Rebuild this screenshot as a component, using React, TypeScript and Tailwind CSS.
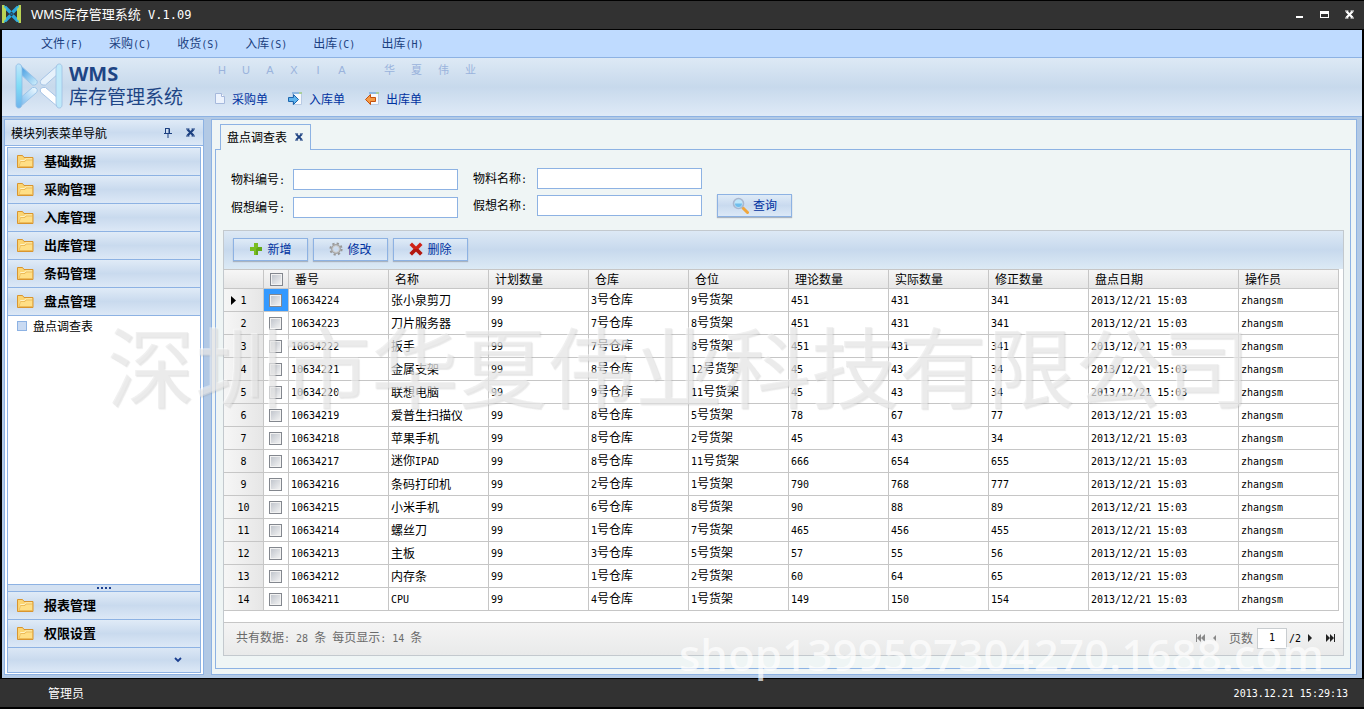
import type { ReactNode } from 'react';

const menus = ['文件(F)', '采购(C)', '收货(S)', '入库(S)', '出库(C)', '出库(H)'];

const groups = ['基础数据', '采购管理', '入库管理', '出库管理', '条码管理', '盘点管理'];

const bottomGroups = ['报表管理', '权限设置'];

const columns = ['番号', '名称', '计划数量', '仓库', '仓位', '理论数量', '实际数量', '修正数量', '盘点日期', '操作员'];

const rows = [
  ['10634224', '张小泉剪刀', '3号仓库', '9号货架', '451', '431', '341'],
  ['10634223', '刀片服务器', '7号仓库', '8号货架', '451', '431', '341'],
  ['10634222', '扳手', '7号仓库', '8号货架', '451', '431', '341'],
  ['10634221', '金属支架', '8号仓库', '12号货架', '45', '43', '34'],
  ['10634220', '联想电脑', '9号仓库', '11号货架', '45', '43', '34'],
  ['10634219', '爱普生扫描仪', '8号仓库', '5号货架', '78', '67', '77'],
  ['10634218', '苹果手机', '8号仓库', '2号货架', '45', '43', '34'],
  ['10634217', '迷你IPAD', '8号仓库', '11号货架', '666', '654', '655'],
  ['10634216', '条码打印机', '2号仓库', '1号货架', '790', '768', '777'],
  ['10634215', '小米手机', '6号仓库', '8号货架', '90', '88', '89'],
  ['10634214', '螺丝刀', '1号仓库', '7号货架', '465', '456', '455'],
  ['10634213', '主板', '3号仓库', '5号货架', '57', '55', '56'],
  ['10634212', '内存条', '1号仓库', '2号货架', '60', '64', '65'],
  ['10634211', 'CPU', '4号仓库', '1号货架', '149', '150', '154'],
];

// Latin runs are set in a half-width mono face, Chinese runs keep the page font
function T({ children }: { children: string }) {
  return (
    <>
      {children.split(/([ -~]+)/).map((part, i) =>
        i % 2 ? (
          <span key={i} className="font-['DejaVu_Sans_Mono',monospace] text-[10px] whitespace-pre">{part}</span>
        ) : (
          part
        ),
      )}
    </>
  );
}

function FolderIcon() {
  return (
    <svg width="17" height="14" viewBox="0 0 17 14" className="shrink-0">
      <path d="M.5 13.5V1.5h5l1.5 2h9v10z" fill="#fbd573" stroke="#d9952f" />
      <path d="M2.5 12.5l1-6h4l1-1.5h6.5" fill="none" stroke="#fff3c4" />
      <path d="M2 12.5l1.5-5h4.5l1-1.5h6.5v6.5z" fill="#ffdf86" stroke="#e3a741" strokeWidth=".6" />
    </svg>
  );
}

function BrandMark() {
  return (
    <svg width="20" height="20" viewBox="0 0 20 20">
      <path d="M3 3l5.500 5.500M3 17l5.500-5.500M16 3l-5.500 5.500M16 17l-5.500-5.500" stroke="#2ba6dc" strokeWidth="3.200" />
      <path d="M0 1h2l2 2v14l-2 2H0z" fill="#b9d455" />
      <path d="M19 1h-2l-2 2v14l2 2h2z" fill="#b9d455" />
      <path d="M2 1l3 3v2L2 3zM2 19l3-3v-2l-3 3zM17 1l-3 3v2l3-3zM17 19l-3-3v-2l3 3z" fill="#35b4e2" />
      <circle cx="9.500" cy="10" r="1.300" fill="#156a9c" />
    </svg>
  );
}

function Logo() {
  return (
    <svg width="48" height="46" viewBox="0 0 48 46" fill="none" className="shrink-0">
      <defs>
        <linearGradient id="barLeft" x1="0" y1="0" x2="0" y2="1">
          <stop offset="0" stopColor="#c2e6fb" />
          <stop offset=".5" stopColor="#7fdcf6" />
          <stop offset="1" stopColor="#6fb4ec" />
        </linearGradient>
        <linearGradient id="armTop" x1="0" y1="0" x2="1" y2="1">
          <stop offset="0" stopColor="#2f8fdd" />
          <stop offset="1" stopColor="#d4f1fc" />
        </linearGradient>
        <linearGradient id="armLow" x1="0" y1="1" x2="1" y2="0">
          <stop offset="0" stopColor="#6bb3ec" />
          <stop offset="1" stopColor="#f4fcff" />
        </linearGradient>
      </defs>
      <path d="M4.500 1.500l17 15.500a3 3 0 01-2 5h-2L4 10z" fill="url(#armTop)" stroke="#9cc4e8" />
      <path d="M4.500 44.500L21.500 29.500a3 3 0 00-2-5h-2L4 36z" fill="url(#armLow)" stroke="#9cc4e8" />
      <path d="M43.500 1.500L26 17a3 3 0 002 5h2.500L44 10z" fill="#e6f1fb" stroke="#a6c4e6" />
      <path d="M43.500 44.500L26 29.500a3 3 0 012-5h2.500L44 36z" fill="#fff" stroke="#a6c4e6" />
      <path d="M1 4c0-3 3-4 5-2l1 3v36l-1 3c-2 2-5 1-5-2z" fill="url(#barLeft)" stroke="#8dbbe4" strokeWidth=".8" />
      <path d="M47 4c0-3-3-4-5-2l-1 3v36l1 3c2 2 5 1 5-2z" fill="#bfe9fa" stroke="#9ebfe2" strokeWidth=".8" />
    </svg>
  );
}

function PageIcon() {
  return (
    <svg width="12" height="13" viewBox="0 0 12 13">
      <path d="M1.500 1.500h6l3 3v7h-9z" fill="#edf3fd" stroke="#a6b9dc" />
      <path d="M7.500 1.500v3h3" fill="#fff" stroke="#a6b9dc" />
    </svg>
  );
}

function InIcon() {
  return (
    <svg width="15" height="15" viewBox="0 0 15 15">
      <path d="M4.500 1.500h9v12h-9z" fill="#f7f9fc" stroke="#b9cbe4" />
      <path d="M4 1h10v2H4z" fill="#8fb7e0" />
      <path d="M11 1h3v2h-3z" fill="#a9cf9b" />
      <path d="M.5 6.500h5v-3l5 5-5 5v-3h-5z" fill="#5fb4ee" stroke="#1c66ae" />
    </svg>
  );
}

function OutIcon() {
  return (
    <svg width="15" height="15" viewBox="0 0 15 15">
      <path d="M4.500 1.500h9v12h-9z" fill="#f7f9fc" stroke="#b9cbe4" />
      <path d="M4 1h10v2H4z" fill="#8fb7e0" />
      <path d="M11 1h3v2h-3z" fill="#a9cf9b" />
      <path d="M10.500 6.500h-5v-3l-5 5 5 5v-3h5z" fill="#f59a45" stroke="#c5500d" />
    </svg>
  );
}

function AddIcon() {
  return (
    <svg width="14" height="14" viewBox="0 0 14 14">
      <path d="M5 1h4v4h4v4H9v4H5V9H1V5h4z" fill="#79bd22" />
      <path d="M9 5h4v4H9v4H7V7z" fill="#559a10" opacity=".6" />
    </svg>
  );
}

function GearIcon() {
  return (
    <svg width="14" height="14" viewBox="0 0 14 14" fill="none">
      <circle cx="7" cy="7" r="5.600" stroke="#979797" strokeWidth="2" strokeDasharray="2.200 2.198" />
      <circle cx="7" cy="7" r="4" stroke="#a3a3a3" strokeWidth="2" />
      <circle cx="7" cy="7" r="3.400" stroke="#d8d8d8" strokeWidth=".8" />
    </svg>
  );
}

function DeleteIcon() {
  return (
    <svg width="14" height="14" viewBox="0 0 14 14">
      <path d="M3 .5l4 4 4-4L13.500 3l-4 4 4 4-2.500 2.500-4-4-4 4L.5 11l4-4-4-4z" fill="#cf2217" />
      <path d="M9.500 7l4 4-2.500 2.500-4-4-4 4L.5 11l4-4z" fill="#9e130c" opacity=".6" />
    </svg>
  );
}

function SearchIcon() {
  return (
    <svg width="17" height="17" viewBox="0 0 17 17" fill="none" strokeLinecap="round">
      <path d="M11 11l4.500 4.500" stroke="#f0a63c" strokeWidth="3" />
      <circle cx="6.500" cy="6.500" r="5" fill="#bfe6fa" stroke="#a9b7cf" strokeWidth="1.600" />
      <path d="M3 6.500h7a3.500 3.500 0 01-7 0z" fill="#6fbdec" />
    </svg>
  );
}

function CloseIcon({ size }: { size: number }) {
  return (
    <svg width={size} height={size} viewBox="0 0 9 9">
      <path d="M1.500 1.500l6 6M7.500 1.500l-6 6" stroke="currentColor" strokeWidth="2.200" />
      <path d="M0 1h3.500M5.500 1H9M0 8h3.500M5.500 8H9" stroke="currentColor" />
    </svg>
  );
}

function NavGroup({ label }: { label: string }) {
  return (
    <button className="flex h-7 w-full shrink-0 items-center gap-[10px] border-b border-[#8db2e3] bg-linear-to-b from-[#e0ebf7] via-[#c9daee] to-[#dce8f6] px-[9px] pb-px text-left text-[13px] font-bold">
      <FolderIcon />
      {label}
    </button>
  );
}

function ToolButton({ icon, children }: { icon: ReactNode; children: ReactNode }) {
  return (
    <button className="flex h-[23px] w-[75px] items-center justify-center gap-1 border border-[#8db2e3] bg-linear-to-b from-[#dfebf7] via-[#c9daef] to-[#dce9f7] pb-px text-[#0032a0] shadow-[0_1px_1px_#a9b4c0]">
      {icon}
      {children}
    </button>
  );
}

function Field({ id, label, gap }: { id: string; label: string; gap: string }) {
  return (
    <div className={`flex items-center ${gap}`}>
      <label htmlFor={id}><T>{label}</T></label>
      <input id={id} className="h-[21px] w-[165px] border border-[#8db2e3] bg-white px-1 outline-none" />
    </div>
  );
}

function Check({ label }: { label: string }) {
  return (
    <input
      type="checkbox"
      aria-label={label}
      className="block size-[13px] appearance-none border border-[#83878e] bg-linear-to-br from-[#bcc1c9] to-[#f6f6f6] shadow-[inset_0_0_0_1px_#f2f2f2]"
    />
  );
}

export default function App() {
  return (
    <div className="relative flex min-h-screen flex-col bg-black font-['Noto_Sans_CJK_SC',sans-serif] text-[12px] leading-4 text-black">
      {/* Title bar */}
      <header className="flex h-[30px] items-center border-y border-black bg-[#323232] pr-[10px] pb-[2px] pl-[2px] text-white">
        <BrandMark />
        <h1 className="ml-[9px] text-[13px]">
          <span className="font-['Liberation_Sans',sans-serif]">WMS</span>库存管理系统
          <span className="font-['DejaVu_Sans_Mono',monospace] text-[12px] whitespace-pre"> V.1.09</span>
        </h1>
        <div className="ml-auto flex items-center gap-4">
          <button aria-label="最小化">
            <svg width="9" height="9" viewBox="0 0 9 9"><path d="M1 6h7v2H1z" fill="#fff" /></svg>
          </button>
          <button aria-label="最大化">
            <svg width="9" height="9" viewBox="0 0 9 9"><path d="M0 1h9v7H0zM1 4v3h7V4z" fill="#fff" fillRule="evenodd" /></svg>
          </button>
          <button aria-label="关闭"><CloseIcon size={9} /></button>
        </div>
      </header>

      <div className="mx-[2px] flex flex-1 flex-col bg-[#b2c9e5]">
        <nav className="flex h-7 items-center gap-[26px] border-b border-[#8db2e3] bg-[#bfdbff] pl-[39px] text-[#1b3f80]">
          {menus.map((m, i) => (
            <a key={i} href="#"><T>{m}</T></a>
          ))}
        </nav>

        {/* Banner */}
        <div className="flex h-[59px] items-center border-b border-[#8db2e3] bg-linear-to-b from-[#dde9f5] via-[#c7d9ec] to-[#dfeaf7] pb-[2px] pl-[13px]">
          <Logo />
          <div className="ml-[6px] text-[#1e4585]">
            <div className="font-['Open_Sans',sans-serif] text-[20px] leading-5 font-bold">WMS</div>
            <div className="text-[19px] leading-6">库存管理系统</div>
          </div>
          <div className="ml-[27px] flex flex-col gap-[13px] pb-1">
            <div className="flex gap-[30px] font-['Liberation_Sans','Noto_Sans_CJK_SC',sans-serif] text-[11px] text-[#9ab3dc]">
              <div className="flex">
                {['H', 'U', 'A', 'X', 'I', 'A'].map((c, i) => (
                  <span key={i} className="w-6 text-center">{c}</span>
                ))}
              </div>
              <div className="flex gap-4">
                {['华', '夏', '伟', '业'].map((c) => (
                  <span key={c}>{c}</span>
                ))}
              </div>
            </div>
            <div className="flex gap-5 pl-1 text-[#0032a0]">
              <button className="flex items-center gap-[6px]"><PageIcon />采购单</button>
              <button className="flex items-center gap-[6px]"><InIcon />入库单</button>
              <button className="flex items-center gap-[6px]"><OutIcon />出库单</button>
            </div>
          </div>
        </div>

        <div className="flex flex-1 gap-[7px] pt-[2px] pr-[5px] pb-[3px] pl-[2px]">
          {/* Navigation */}
          <aside className="flex w-[200px] shrink-0 flex-col border border-[#8db2e3] bg-white">
            <div className="flex h-[26px] items-center border-b border-[#8db2e3] bg-linear-to-b from-[#e0ebf7] via-[#cadbef] to-[#dce8f6] pr-2 pl-[6px]">
              <span>模块列表菜单导航</span>
              <div className="ml-auto flex items-center gap-[14px] text-[#1b3f80]">
                <button aria-label="固定">
                  <svg width="8" height="10" viewBox="0 0 8 10"><path d="M1.500.500h4v5M1.500 0v5.500M0 5.500h8M4 6v4M5 1v5" fill="none" stroke="currentColor" /></svg>
                </button>
                <button aria-label="关闭导航"><CloseIcon size={9} /></button>
              </div>
            </div>
            <div className="mx-[2px] my-px flex flex-1 flex-col border border-[#8db2e3]">
              {groups.map((g) => (
                <NavGroup key={g} label={g} />
              ))}
              <a href="#" className="flex items-center gap-[6px] px-[9px] pt-[2px]">
                <span className="size-[10px] border border-[#8db2e3] bg-[#c9daf2]" />
                盘点调查表
              </a>
              <div className="mt-auto flex h-2 items-center justify-center gap-[2px] border-y border-[#8db2e3] bg-[#d3e1f2]">
                {[0, 1, 2, 3].map((i) => (
                  <span key={i} className="size-[2px] bg-[#1b3f90]" />
                ))}
              </div>
              {bottomGroups.map((g) => (
                <NavGroup key={g} label={g} />
              ))}
              <div className="flex h-6 items-center justify-end bg-linear-to-b from-[#dbe7f5] via-[#c9daee] to-[#dce8f6] pr-[18px]">
                <button aria-label="更多">
                  <svg width="8" height="6" viewBox="0 0 8 6"><path d="M1 1l3 3 3-3" fill="none" stroke="#1b3f90" strokeWidth="1.800" /></svg>
                </button>
              </div>
            </div>
          </aside>

          {/* Workspace */}
          <main className="flex min-w-0 flex-1 flex-col border border-[#8db2e3] bg-[#eff5f5] pt-1 pr-[5px] pb-[5px] pl-[3px]">
            <div className="flex pl-[5px]">
              <div className="relative -mb-px flex h-[26px] items-center gap-2 border border-b-0 border-[#8db2e3] bg-[#eff5f5] pr-[7px] pb-[2px] pl-[6px]">
                盘点调查表
                <button aria-label="关闭标签" className="text-[#1b3f80]"><CloseIcon size={8} /></button>
              </div>
            </div>
            <div className="flex flex-1 flex-col border border-[#8db2e3] px-[6px] pb-3">
              <form className="flex h-20 gap-[15px] pt-[18px] pl-[9px]">
                <div className="flex flex-col gap-[7px] pt-px">
                  <Field id="code" label="物料编号:" gap="gap-2" />
                  <Field id="altCode" label="假想编号:" gap="gap-2" />
                </div>
                <div className="flex flex-col gap-[6px]">
                  <Field id="name" label="物料名称:" gap="gap-[10px]" />
                  <Field id="altName" label="假想名称:" gap="gap-[10px]" />
                </div>
                <div className="pt-[26px]">
                  <ToolButton icon={<SearchIcon />}>查询</ToolButton>
                </div>
              </form>

              <div className="ml-px flex flex-1 flex-col border border-[#c3c9ce] bg-white">
                <div className="flex h-[38px] shrink-0 items-center gap-[5px] bg-linear-to-b from-[#dde9f5] via-[#c7d9ed] to-[#dceaf5] pb-[2px] pl-[9px]">
                  <ToolButton icon={<AddIcon />}>新增</ToolButton>
                  <ToolButton icon={<GearIcon />}>修改</ToolButton>
                  <ToolButton icon={<DeleteIcon />}>删除</ToolButton>
                </div>
                <div className="pr-1 pb-[11px]">
                  <table className="w-full table-fixed border-separate border-spacing-0 text-left">
                    <colgroup>
                      <col className="w-[40px]" />
                      <col className="w-[25px]" />
                      {columns.map((c) => (
                        <col key={c} className={c === '盘点日期' ? 'w-[150px]' : 'w-[100px]'} />
                      ))}
                    </colgroup>
                    <thead>
                      <tr className="bg-linear-to-b from-[#f7f7f7] to-[#e6e6e6]">
                        <th className="h-5 border border-l-0 border-[#c6c6c6] p-0" />
                        <th className="border-y border-r border-[#c6c6c6] p-0 pl-[6px]"><Check label="全选" /></th>
                        {columns.map((c) => (
                          <th key={c} className="border-y border-r border-[#c6c6c6] p-0 pl-[6px] font-normal">{c}</th>
                        ))}
                      </tr>
                    </thead>
                    <tbody>
                      {rows.map(([code, name, store, shelf, theory, actual, fixed], i) => (
                        <tr key={code}>
                          <td className="h-[23px] border-r border-b border-[#c6c6c6] bg-linear-to-r from-[#f6f6f6] to-[#e6e6e6] p-0">
                            <div className="flex items-center">
                              <span className="flex w-3 justify-end">
                                {i === 0 && <svg width="5" height="9" viewBox="0 0 5 9"><path d="M0 0l5 4.500L0 9z" /></svg>}
                              </span>
                              <span className="w-[15px] text-center"><T>{String(i + 1)}</T></span>
                            </div>
                          </td>
                          <td className={`border-r border-b border-[#c6c6c6] p-0 pl-[5px] ${i === 0 ? 'bg-[#3399ff]' : ''}`}>
                            <Check label={code} />
                          </td>
                          {[code, name, '99', store, shelf, theory, actual, fixed, '2013/12/21 15:03', 'zhangsm'].map((v, k) => (
                            <td key={k} className="border-r border-b border-[#c6c6c6] p-0 pl-[2px] whitespace-nowrap"><T>{v}</T></td>
                          ))}
                        </tr>
                      ))}
                    </tbody>
                  </table>
                </div>
                <div className="mt-auto flex h-[33px] items-center border-t border-[#c6c6c6] bg-linear-to-b from-[#f4f4f4] to-[#e9eaea] pr-2 pb-[2px] pl-3 text-[#6a6a6a]">
                  <span><T>共有数据: 28 条 每页显示: 14 条</T></span>
                  <div className="ml-auto flex items-center">
                    <button aria-label="首页">
                      <svg width="10" height="8" viewBox="0 0 10 8"><path d="M0 0h1v8H0zM5 0v8L1 4zM9 0v8L5 4z" fill="#888" /></svg>
                    </button>
                    <button aria-label="上一页" className="ml-[6px]">
                      <svg width="5" height="8" viewBox="0 0 5 8"><path d="M4 1v6L1 4z" fill="#888" /></svg>
                    </button>
                    <label htmlFor="page" className="ml-3">页数</label>
                    <input id="page" defaultValue="1" className="ml-1 h-[21px] w-[30px] border border-[#c9cdd0] bg-white pb-[2px] text-center font-['DejaVu_Sans_Mono',monospace] text-[10px] text-black" />
                    <span className="ml-[2px] text-black"><T>/2</T></span>
                    <button aria-label="下一页" className="ml-[6px]">
                      <svg width="6" height="8" viewBox="0 0 6 8"><path d="M1 0v8l4-4z" fill="#222" /></svg>
                    </button>
                    <button aria-label="末页" className="ml-3">
                      <svg width="10" height="8" viewBox="0 0 10 8"><path d="M9 0h1v8H9zM1 0v8l4-4zM5 0v8l4-4z" fill="#222" /></svg>
                    </button>
                  </div>
                </div>
              </div>
            </div>
          </main>
        </div>
      </div>

      {/* Status bar */}
      <footer className="mt-px flex h-[30px] items-center justify-between border-b-2 border-black bg-[#323232] pr-4 pl-12 text-white">
        <span>管理员</span>
        <span><T>2013.12.21 15:29:13</T></span>
      </footer>

      {/* Watermarks */}
      <div className="pointer-events-none absolute top-[319px] left-[107px] text-[88px] leading-[88px] whitespace-nowrap text-[#e4e4e4]/50 [text-shadow:-1px_-1px_0_#ffffff66,1px_1px_1px_#8888882e]">
        深圳市华夏伟业科技有限公司
      </div>
      <div className="pointer-events-none absolute right-[40px] bottom-[25px] font-['Noto_Sans',sans-serif] text-[44px] leading-[60px] font-medium whitespace-nowrap text-white/70">
        shop1399597304270.1688.com
      </div>
    </div>
  );
}
